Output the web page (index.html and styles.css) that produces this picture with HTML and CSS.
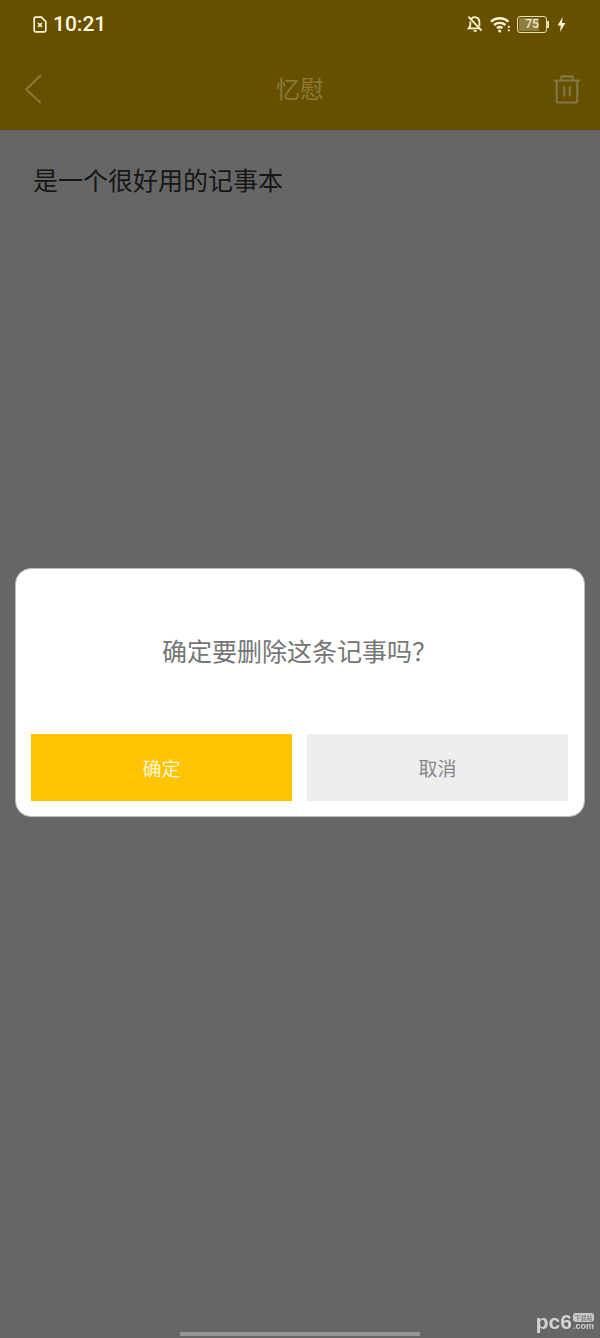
FILE: index.html
```html
<!DOCTYPE html>
<html lang="zh-CN">
<head>
    <meta charset="UTF-8">
    <meta name="viewport" content="width=device-width, initial-scale=1.0">
    <title>忆慰</title>
    <link rel="stylesheet" href="styles.css">
</head>
<body>
    <div class="page">
        <header class="top">
            <div class="status">
                <div class="status-left">
                    <svg class="sim" width="14" height="17" viewBox="0 0 14 17" fill="none" stroke="#fff3d0" stroke-width="1.7">
                        <path d="M1.2 2.4a1.2 1.2 0 0 1 1.2-1.2h6l4.400 4.400v9a1.200 1.200 0 0 1-1.200 1.200h-9.200a1.200 1.200 0 0 1-1.200-1.200z"/>
                        <path d="M5 7l4 4M9 7l-4 4"/>
                    </svg>
                    <span class="time">10:21</span>
                </div>
                <div class="status-right">
                    <!-- 静音 -->
                    <svg width="16" height="18" viewBox="0 0 16 18" fill="none" stroke="#fff3d0" stroke-width="1.8">
                        <path d="M4 4.2A4.600 4.600 0 0 1 12.400 6.800v4.400M3.300 6.500v4.300L1.600 13.400h10.600"/>
                        <path d="M6.600 15.800h3"/>
                        <path d="M1.400 1.600l13.200 14"/>
                    </svg>
                    <!-- wifi -->
                    <svg class="wifi" width="21" height="17" viewBox="0 0 21 17" fill="none" stroke="#fff3d0" stroke-width="2.4">
                        <path d="M1 5.600a13 13 0 0 1 17.400 0"/>
                        <path d="M4 9a8.600 8.600 0 0 1 11.400 0"/>
                        <path d="M7 12.200a4.200 4.200 0 0 1 5.400 0"/>
                        <circle cx="9.700" cy="15" r="1.500" fill="#fff3d0" stroke="none"/>
                        <path d="M18.800 10v1.800M18.800 13.400v1.800" stroke-width="2"/>
                    </svg>
                    <div class="battery">
                        <div class="battery-body"><div class="battery-level" style="width:75%"></div><span class="battery-num">75</span></div>
                        <div class="battery-cap"></div>
                    </div>
                    <svg class="bolt" width="9" height="15" viewBox="0 0 9 15"><path d="M5.600 0L0.600 8.400h3.200L3 15l5.400-9H5z" fill="#fff3d0"/></svg>
                </div>
            </div>
            <div class="nav">
                <svg class="nav-back" width="20" height="32" viewBox="0 0 20 32" fill="none" stroke="#8b7a3a" stroke-width="1.8"><path d="M17 2L2 16.500l15 13.500"/></svg>
                <h1 class="title">忆慰</h1>
                <svg class="nav-del" width="28" height="30" viewBox="0 0 30 32" fill="none" stroke="#85764a" stroke-width="2.2">
                    <path d="M1 7h28"/>
                    <path d="M9 7V2.500h12V7"/>
                    <path d="M4 7v21.500a2 2 0 0 0 2 2h18a2 2 0 0 0 2-2V7"/>
                    <path d="M12 13v11M18 13v11"/>
                </svg>
            </div>
        </header>
        <main class="note">
            <p class="note-text">是一个很好用的记事本</p>
        </main>
    </div>

    <div class="dialog">
        <p class="dialog-msg"><span>确定要删除这条记事吗<span class="q">？</span></span></p>
        <div class="dialog-btns">
            <div class="btn btn-ok">确定</div>
            <div class="btn btn-cancel">取消</div>
        </div>
    </div>

    <div class="home-bar"></div>
    <div class="mark"><span class="mark-logo">pc6</span><span class="mark-side"><span class="mark-tag">下载站</span><span class="mark-com">.com</span></span></div>
</body>
</html>
```
FILE: styles.css
```css
*{
    margin:0;
    padding:0;
    box-sizing:border-box;
}
body{
    width:600px;
    height:1338px;
    overflow:hidden;
    background:#666666;
    font-family:"Noto Sans CJK SC","Liberation Sans",sans-serif;
}
.page{
    height:100%;
    display:flex;
    flex-direction:column;
}
.top{
    height:130px;
    background:#665000;
}
.status{
    height:48px;
    padding:0 34px 0 33px;
    display:flex;
    justify-content:space-between;
    align-items:center;
}
.status-left{
    display:flex;
    align-items:center;
    gap:6px;
}
.time{
    font-family:Roboto,"Liberation Sans",sans-serif;
    font-size:21px;
    font-weight:500;
    color:#fff6dc;
}
.status-right{
    display:flex;
    align-items:center;
    gap:7px;
}
.wifi{
    margin-right:-1px;
}
.battery{
    display:flex;
    align-items:center;
}
.battery-body{
    position:relative;
    width:30px;
    height:17px;
    border:1.5px solid #e8dcae;
    border-radius:3px;
    padding:1px;
}
.battery-level{
    height:100%;
    background:#8e7c42;
}
.battery-num{
    position:absolute;
    top:0;
    left:0;
    width:100%;
    text-align:center;
    font-family:Roboto,sans-serif;
    font-size:12px;
    font-weight:500;
    line-height:14px;
    color:#f2ead0;
}
.battery-cap{
    width:2px;
    height:7px;
    background:#e8dcae;
}
.bolt{
    margin-left:1px;
}
.nav{
    height:82px;
    padding:0 19px;
    display:grid;
    grid-template-columns:1fr auto 1fr;
    align-items:center;
}
.nav-back{
    margin-left:5px;
}
.nav-del{
    justify-self:end;
}
.title{
    padding-bottom:3px;
    font-size:24px;
    font-weight:400;
    color:#8b7a3a;
}
.note{
    flex:1;
    padding:30px 33px;
}
.note-text{
    font-size:25px;
    line-height:38px;
    color:#161616;
}
.dialog{
    position:fixed;
    top:568px;
    left:15px;
    width:570px;
    height:249px;
    padding:0 16px 15px 15px;
    display:flex;
    flex-direction:column;
    background:#fff;
    border:1px solid #bdbdbd;
    border-radius:16px;
}
.dialog-msg{
    flex:1;
    display:flex;
    align-items:center;
    justify-content:center;
    padding-bottom:3px;
    font-size:25px;
    color:#757575;
}
.q{
    font-family:"Noto Sans CJK TC",sans-serif;
}
.dialog-btns{
    display:flex;
    gap:15px;
}
.btn{
    flex:1;
    height:67px;
    display:flex;
    align-items:center;
    justify-content:center;
    font-size:19px;
}
.btn-ok{
    background:#ffc300;
    color:#fff7dc;
}
.btn-cancel{
    background:#eeeeee;
    color:#858585;
}
.home-bar{
    position:fixed;
    left:180px;
    bottom:2px;
    width:240px;
    height:4px;
    background:#969696;
}
.mark{
    position:fixed;
    right:6px;
    bottom:7px;
    display:flex;
    align-items:flex-end;
    color:#d4d4d4;
    font-family:"Liberation Sans",sans-serif;
}
.mark-logo{
    font-size:21px;
    line-height:18px;
    font-weight:700;
}
.mark-side{
    display:flex;
    flex-direction:column;
    align-items:center;
    margin-left:1px;
}
.mark-tag{
    font-family:"Noto Sans CJK SC",sans-serif;
    font-size:6px;
    line-height:9px;
    padding:0 1.5px;
    background:#c8c8c8;
    color:#666;
    border-radius:3px;
}
.mark-com{
    font-size:9px;
    line-height:9px;
    font-weight:700;
}
```
